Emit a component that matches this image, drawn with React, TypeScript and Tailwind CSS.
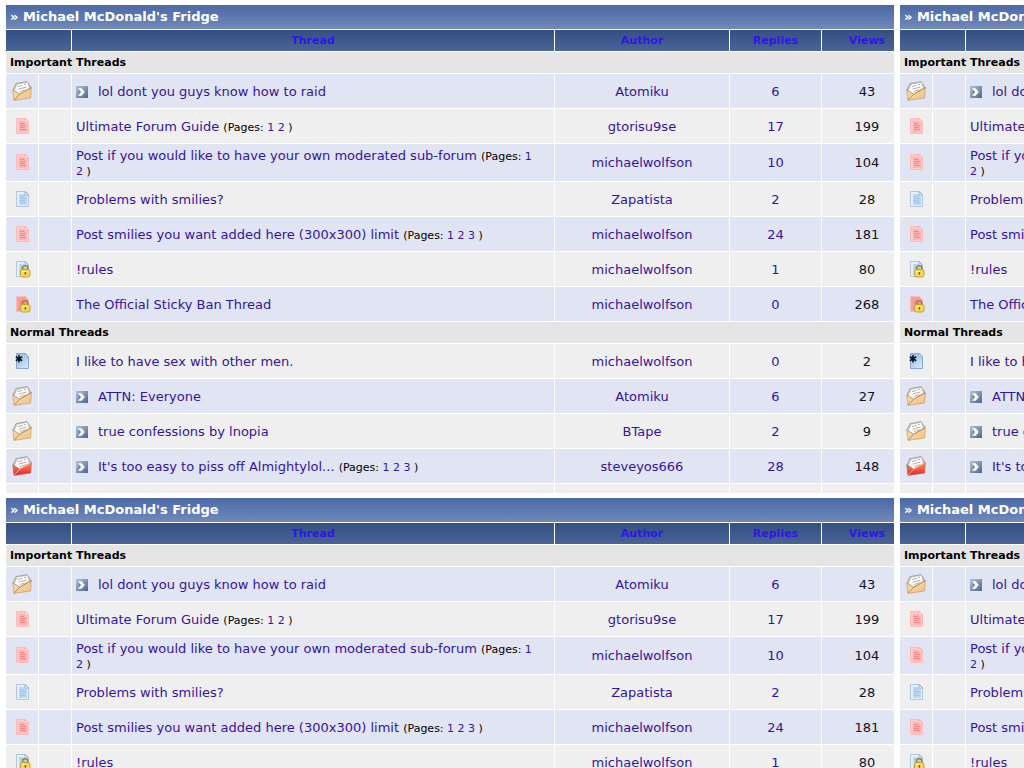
import type { ReactNode } from "react";

type IconKind = "open" | "hot" | "doc" | "note" | "lockedDoc" | "lockedNote" | "moved";

type Thread = {
  icon: IconKind;
  title: string;
  poll?: boolean;
  pages?: number[];
  author: string;
  replies: number;
  views: number;
};

const important: Thread[] = [
  { icon: "open", title: "lol dont you guys know how to raid", poll: true, author: "Atomiku", replies: 6, views: 43 },
  { icon: "note", title: "Ultimate Forum Guide", pages: [1, 2], author: "gtorisu9se", replies: 17, views: 199 },
  { icon: "note", title: "Post if you would like to have your own moderated sub-forum", pages: [1, 2], author: "michaelwolfson", replies: 10, views: 104 },
  { icon: "doc", title: "Problems with smilies?", author: "Zapatista", replies: 2, views: 28 },
  { icon: "note", title: "Post smilies you want added here (300x300) limit", pages: [1, 2, 3], author: "michaelwolfson", replies: 24, views: 181 },
  { icon: "lockedDoc", title: "!rules", author: "michaelwolfson", replies: 1, views: 80 },
  { icon: "lockedNote", title: "The Official Sticky Ban Thread", author: "michaelwolfson", replies: 0, views: 268 },
];

const normal: Thread[] = [
  { icon: "moved", title: "I like to have sex with other men.", author: "michaelwolfson", replies: 0, views: 2 },
  { icon: "open", title: "ATTN: Everyone", poll: true, author: "Atomiku", replies: 6, views: 27 },
  { icon: "open", title: "true confessions by lnopia", poll: true, author: "BTape", replies: 2, views: 9 },
  { icon: "hot", title: "It's too easy to piss off Almightylol...", poll: true, pages: [1, 2, 3], author: "steveyos666", replies: 28, views: 148 },
];

function IconDefs() {
  return (
    <svg width="0" height="0" className="absolute" aria-hidden="true">
      <defs>
        <linearGradient id="tan" x1="0" y1="0" x2="1" y2="1">
          <stop offset="0" stopColor="#fbdcae" />
          <stop offset="1" stopColor="#f2c282" />
        </linearGradient>
        <linearGradient id="red" x1="0" y1="0" x2="0" y2="1">
          <stop offset="0" stopColor="#f99a62" />
          <stop offset=".6" stopColor="#f0503f" />
          <stop offset="1" stopColor="#e0203c" />
        </linearGradient>
        <linearGradient id="steel" x1="0" y1="0" x2="1" y2="1">
          <stop offset="0" stopColor="#b4c3d8" />
          <stop offset="1" stopColor="#4d658c" />
        </linearGradient>
        <linearGradient id="sky" x1="0" y1="0" x2="1" y2="1">
          <stop offset="0" stopColor="#8fb9e8" />
          <stop offset="1" stopColor="#dceafa" />
        </linearGradient>
      </defs>
    </svg>
  );
}

function Envelope({ hot }: { hot?: boolean }) {
  return (
    <svg width="20" height="20" viewBox="0 0 20 20">
      <path d="M.8 9 4 2.5 15 .6 19.5 7 9 14Z" fill="#d6cdc6" stroke="#94857a" strokeWidth=".6" />
      <path d="M2.2 9.5 5.2 3.2 15.5 1.2 17.5 7.5 8 13.5Z" fill="#fdfdfd" stroke="#9a9a9a" strokeWidth=".5" />
      <path d="M6 5.6 10.5 4.4M12 3.6l2-.4M6.5 8.2l8-2.2M8 10.6l5.5-2" stroke="#9b9b9b" strokeWidth=".8" />
      <path d="M.8 9 7.5 13.2 19.3 6.5 18.6 17 2 19.4Z" fill={hot ? "url(#red)" : "url(#tan)"} stroke={hot ? "#cf4a3b" : "#bb9465"} strokeWidth=".6" />
      <path d="M2 19.2 7.6 13.3 19 6.8" fill="none" stroke={hot ? "#fbc3a0" : "#a97f51"} strokeWidth=".8" />
    </svg>
  );
}

function Sheet({ red }: { red?: boolean }) {
  return (
    <>
      <path d="M2.5.5h9l3 3v12h-12v-15Z" fill={red ? "#fdcaca" : "#e6f1fc"} stroke={red ? "#fbbcbc" : "#b3c6de"} />
      <path d="M5 3h6v2h2v9H5Z" fill={red ? "#fbb5b5" : "#bcd8f6"} />
      <path d="M11 .8v3.4h3.4Z" fill="#fff" stroke={red ? "#f5a3a3" : "#7f9cc4"} strokeWidth=".7" />
      <path d="M6 5.5h4M6 7.5h6M6 9.5h5M6 11.5h6" stroke={red ? "#f28585" : "#a3c6ee"} />
    </>
  );
}

function Padlock() {
  return (
    <>
      <path d="M8.5 9.5V7.5a2.7 2.7 0 0 1 5.4 0v2" fill="none" stroke="#9c8432" strokeWidth="1.5" />
      <rect x="6.5" y="8.5" width="9.5" height="7.5" rx="2" fill="#f7d84e" stroke="#c19c28" strokeWidth=".9" />
      <path d="M8 10.5h4" stroke="#fff3a8" strokeWidth="1.2" />
      <path d="M11.4 11v2.6" stroke="#6b5614" strokeWidth="1.4" />
    </>
  );
}

function StatusIcon({ kind }: { kind: IconKind }) {
  if (kind === "open" || kind === "hot") return <Envelope hot={kind === "hot"} />;
  if (kind === "moved") {
    return (
      <svg width="17" height="17" viewBox="0 0 17 17">
        <path d="M2.5.5h9l3 3v12h-12v-15Z" fill="url(#sky)" stroke="#86a9d4" />
        <path d="M11 .8v3.4h3.4Z" fill="#fff" stroke="#7d9bc2" strokeWidth=".7" />
        <path d="M5 2v7.5M1.8 3.8l6.4 4M8.2 3.8l-6.4 4" stroke="#0c1420" strokeWidth="1.6" />
      </svg>
    );
  }
  return (
    <svg width="17" height="17" viewBox="0 0 17 17">
      <Sheet red={kind === "note" || kind === "lockedNote"} />
      {kind === "lockedNote" && <path d="M3 1h8l3 3v11H3Z" fill="#f28c8c" opacity=".7" />}
      {(kind === "lockedDoc" || kind === "lockedNote") && <Padlock />}
    </svg>
  );
}

function GotoIcon() {
  return (
    <svg width="12" height="12" viewBox="0 0 12 12">
      <rect width="12" height="12" fill="url(#steel)" />
      <path d="M2.5 2.5H5.5L8.5 6 5.5 9.5H2.5L5.5 6Z" fill="#fff" stroke="#fff" strokeWidth=".5" />
      <path d="M3 4.5 4.3 6 3 7.5Z" fill="#5d7499" />
    </svg>
  );
}

function Link({ children }: { children: ReactNode }) {
  return <a href="#" className="text-[#34159a]">{children}</a>;
}

function ThreadRow({ thread, shaded }: { thread: Thread; shaded: boolean }) {
  const cell = "border-b border-r border-white";
  return (
    <tr className={shaded ? "h-[35px] bg-[#e1e4f2]" : "h-[35px] bg-[#efefef]"}>
      <td className={cell}>
        <div className="flex justify-center"><StatusIcon kind={thread.icon} /></div>
      </td>
      <td className={cell}></td>
      <td className={`${cell} pt-1 pr-4 pb-[3px] pl-1`}>
        <div className="flex items-center gap-[10px]">
          {thread.poll && <a href="#" aria-label="Go to first new post"><GotoIcon /></a>}
          <div>
            <Link>{thread.title}</Link>
            {thread.pages && (
              <>
                {" "}
                <span className="text-[11px] leading-3">
                  (Pages: {thread.pages.map((page) => <span key={page}><Link>{page}</Link> </span>)})
                </span>
              </>
            )}
          </div>
        </div>
      </td>
      <td className={`${cell} text-center`}><Link>{thread.author}</Link></td>
      <td className={`${cell} text-center`}><Link>{thread.replies}</Link></td>
      <td className="border-b border-white pl-[18px] text-center text-[#111122]">{thread.views}</td>
    </tr>
  );
}

function SectionRow({ children }: { children: ReactNode }) {
  return (
    <tr className="h-[22px] bg-[#e5e5e5]">
      <th colSpan={6} className="border-b border-white px-1 text-left text-[11px] font-bold text-black">{children}</th>
    </tr>
  );
}

function ForumTable() {
  const head = "border-b border-r border-white text-[11px] font-bold";
  const headLink = "text-[#2d17e6]";
  return (
    <section className="w-[calc(100vw-130px)] shrink-0 pt-[5px] pl-[6px]">
      <h2 className="flex h-[25px] items-center border-b border-white bg-linear-to-b from-[#4a69a6] to-[#7289b8] px-1 text-[13px] font-bold text-white">
        » Michael McDonald's Fridge
      </h2>
      <table className="w-full table-fixed border-separate border-spacing-0 text-[13px] leading-[15px]">
        <colgroup>
          <col className="w-[33px]" />
          <col className="w-[33px]" />
          <col />
          <col className="w-[175px]" />
          <col className="w-[92px]" />
          <col className="w-[72px]" />
        </colgroup>
        <thead>
          <tr className="h-[22px] bg-linear-to-b from-[#344f82] to-[#4c6599]">
            <td colSpan={2} className={head}></td>
            <th className={head}><a href="#" className={headLink}>Thread</a></th>
            <th className={head}><a href="#" className={headLink}>Author</a></th>
            <th className={head}><a href="#" className={headLink}>Replies</a></th>
            <th className="border-b border-white pl-[18px] text-[11px] font-bold"><a href="#" className={headLink}>Views</a></th>
          </tr>
        </thead>
        <tbody>
          <SectionRow>Important Threads</SectionRow>
          {important.map((thread, i) => <ThreadRow key={thread.title} thread={thread} shaded={i % 2 === 0} />)}
          <SectionRow>Normal Threads</SectionRow>
          {normal.map((thread, i) => <ThreadRow key={thread.title} thread={thread} shaded={i % 2 === 1} />)}
          {/* next row, cut off by the bottom edge */}
          <tr className="h-[9px] bg-[#efefef]">
            <td className="border-r border-white"></td>
            <td className="border-r border-white"></td>
            <td className="border-r border-white"></td>
            <td className="border-r border-white"></td>
            <td className="border-r border-white"></td>
            <td></td>
          </tr>
        </tbody>
      </table>
    </section>
  );
}

export default function App() {
  return (
    <main className="h-screen overflow-hidden bg-white font-['Verdana','DejaVu_Sans',sans-serif]">
      <IconDefs />
      <div className="flex">
        <ForumTable />
        <ForumTable />
      </div>
      <div className="flex">
        <ForumTable />
        <ForumTable />
      </div>
    </main>
  );
}
